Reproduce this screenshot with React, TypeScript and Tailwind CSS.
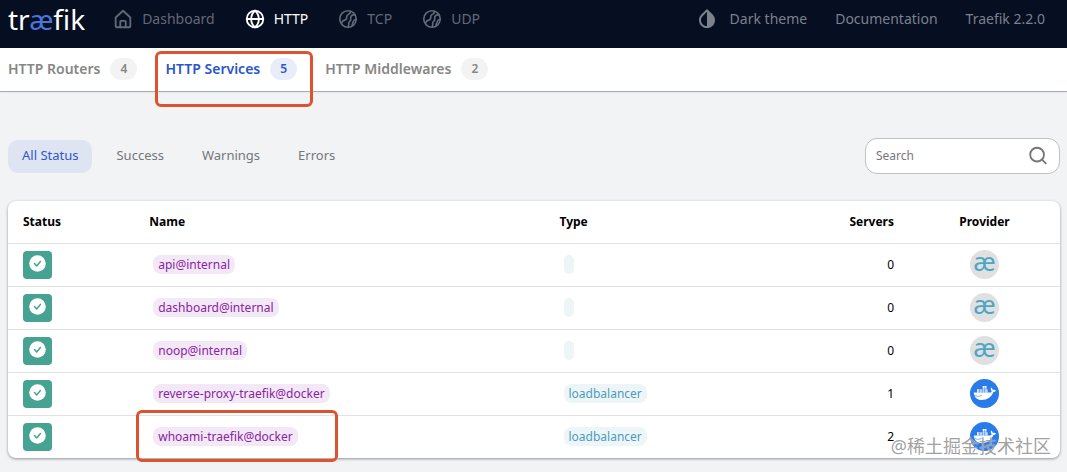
import type { ReactNode } from "react";
import { MdInvertColors } from "react-icons/md";

const iconProps = {
  viewBox: "0 0 24 24",
  fill: "none",
  stroke: "currentColor",
  strokeWidth: 2,
  strokeLinecap: "round" as const,
  strokeLinejoin: "round" as const,
};

const HomeIcon = () => (
  <svg {...iconProps} className="size-[22px]">
    <path d="M4 10.400 12 3l8 7.400V20a1 1 0 0 1-1 1H5a1 1 0 0 1-1-1z" />
    <path d="M9 21v-6a1 1 0 0 1 1-1h4a1 1 0 0 1 1 1v6" />
  </svg>
);

const GlobeIcon = () => (
  <svg {...iconProps} className="size-[22px]">
    <circle cx="12" cy="12" r="9" />
    <path d="M3 12h18M12 3c-3 2.600-4.200 5.600-4.200 9s1.200 6.400 4.200 9M12 3c3 2.600 4.200 5.600 4.200 9s-1.200 6.400-4.200 9" />
  </svg>
);

const Globe2Icon = () => (
  <svg {...iconProps} strokeWidth={1.8} className="size-[22px]">
    <circle cx="12" cy="12" r="9" />
    <path d="M14.800 3.600c-.2 1.700-1 2.800-2.300 3.300-1.500.6-2 1.500-1.900 3.100.1 1.800-.7 3-2.300 3.300-1.600.2-2.500.9-3.300 3.200" />
    <path d="M19.500 7.200c-2.200.1-3.700.7-4.300 2.100-.5 1.200-.1 2.300-.3 3.600-.2 1.200-1.400 1.700-1.900 2.900-.5 1.400.1 3-.8 5" />
    <path d="M20.300 12.500c-1.500.3-2.300 1-2.500 2.300-.2 1.500-1.200 2.200-1.300 4.100" />
  </svg>
);

const SearchIcon = () => (
  <svg {...iconProps} className="size-[22px] text-[#777]">
    <circle cx="11" cy="10.500" r="7.500" />
    <path d="m16.500 16 4 4" />
  </svg>
);

const StatusIcon = () => (
  <span className="flex h-7 w-[29px] items-center justify-center rounded bg-[#46a291] pb-0.5">
    <svg viewBox="0 0 17 17" className="size-[17px]" role="img" aria-label="Success">
      <circle cx="8.500" cy="8.500" r="8.300" fill="#fff" />
      <path
        d="m5.500 8.500 2.200 2.400 3.700-4.400"
        fill="none"
        stroke="#46a291"
        strokeWidth="1.500"
        strokeLinecap="round"
        strokeLinejoin="round"
      />
    </svg>
  </span>
);

const DockerIcon = () => (
  <svg viewBox="0 0 29 29" className="mx-auto block size-[29px]">
    <circle cx="14.500" cy="14.500" r="14.500" fill="#2a7bea" />
    <g fill="#fff">
      <path d="M12.500 7h4v3.200h-4zM7 10.200h10.500v3.400H7z" />
      <path d="M3.800 13.600h15.700c1.300 0 2-.7 2.200-1.600-1-1-1.300-2.200-.6-3.500.9.500 1.600 1.300 1.700 2.400 1.200-.4 2.300-.3 3.200.3-.4 1.200-1.300 1.800-2.600 1.900-1.800 4.900-6 8-11.700 8-4.300 0-7.500-2.300-7.900-7.500z" />
    </g>
    <path
      d="M9.600 10.400v3M12.300 7.500v6M14.700 7.500v6M7.500 12h9.500M8 9.900h9M4.500 16.300c2.500 1.500 5.500 1.200 7.500-.2"
      fill="none"
      stroke="#2a7bea"
      strokeWidth=".6"
    />
  </svg>
);

const InternalIcon = () => (
  <span className="mx-auto flex size-[29px] items-center justify-center rounded-full bg-[#e0e0e0] pb-[7px] text-[26px] leading-[26px] text-[#4fa6c4]">
    æ
  </span>
);

// red marker frame around the highlighted item
const Marker = ({ className }: { className: string }) => (
  <span className={`pointer-events-none absolute rounded-md border-3 border-[#dd5330] ${className}`} />
);

const navItems = [
  { label: "Dashboard", icon: <HomeIcon /> },
  { label: "HTTP", icon: <GlobeIcon />, active: true },
  { label: "TCP", icon: <Globe2Icon /> },
  { label: "UDP", icon: <Globe2Icon /> },
];

const tabs = [
  { label: "HTTP Routers", count: 4 },
  { label: "HTTP Services", count: 5, active: true },
  { label: "HTTP Middlewares", count: 2 },
];

const filters = ["All Status", "Success", "Warnings", "Errors"];

const services = [
  { name: "api@internal", type: "", servers: 0, provider: "internal" },
  { name: "dashboard@internal", type: "", servers: 0, provider: "internal" },
  { name: "noop@internal", type: "", servers: 0, provider: "internal" },
  { name: "reverse-proxy-traefik@docker", type: "loadbalancer", servers: 1, provider: "docker" },
  { name: "whoami-traefik@docker", type: "loadbalancer", servers: 2, provider: "docker", marked: true },
];

const Chip = ({ className, children }: { className: string; children?: ReactNode }) => (
  <span className={`ml-1 inline-block h-[19px] rounded-lg px-[5px] align-middle leading-[19px] ${className}`}>
    {children}
  </span>
);

const Header = () => (
  <header className="flex h-12 items-center bg-[#060e21] pr-[22px] pb-2.5 pl-2 text-sm text-[#7b818d]">
    <a href="#" className="text-[28px] leading-9 text-white">
      tr<span className="text-[#4a76dc]">æ</span>fik
    </a>
    <nav className="ml-[27px] flex items-center gap-[29px]">
      {navItems.map((item) => (
        <a
          key={item.label}
          href="#"
          className={`flex items-center gap-2 ${item.active ? "text-white" : "text-[#626977]"}`}
        >
          {item.icon}
          {item.label}
        </a>
      ))}
    </nav>
    <div className="ml-auto flex items-center gap-7">
      <button className="flex items-center gap-[11px]">
        <MdInvertColors className="size-6" />
        Dark theme
      </button>
      <a href="#">Documentation</a>
      <a href="#">Traefik 2.2.0</a>
    </div>
  </header>
);

const Tabs = () => (
  <nav className="flex h-11 gap-7 border-b border-[#a9abad] bg-white pl-2 text-sm font-semibold shadow-xs">
    {tabs.map((tab) => (
      <a
        key={tab.label}
        href="#"
        className={`relative flex items-center gap-2.5 pb-px ${tab.active ? "text-[#2a55cb]" : "text-[#868686]"}`}
      >
        {tab.label}
        <span
          className={`flex h-[22px] w-[27px] items-center justify-center rounded-full text-xs ${
            tab.active ? "bg-[#e9edf9]" : "bg-[#f3f3f3]"
          }`}
        >
          {tab.count}
        </span>
        {tab.active && <Marker className="top-[3px] -right-4 -bottom-4 -left-2.5 z-10" />}
      </a>
    ))}
  </nav>
);

const ServicesTable = () => (
  <table className="w-full table-fixed rounded-lg bg-white text-xs text-black shadow-[0_1px_3px_rgba(0,0,0,0.4)]">
    <thead>
      <tr className="h-[42px] text-left [&>th]:px-[15px] [&>th]:font-bold">
        <th className="w-[12%]">Status</th>
        <th className="w-[39%]">Name</th>
        <th>Type</th>
        <th className="w-[12%] text-right">Servers</th>
        <th className="w-[151px] text-center">Provider</th>
      </tr>
    </thead>
    <tbody>
      {services.map((service) => (
        <tr key={service.name} className="h-[43px] border-t border-[#e2e2e2] [&>td]:px-[15px]">
          <td>
            <StatusIcon />
          </td>
          <td className="relative">
            <Chip className="bg-[#f2e8f6] text-[#8a23a3]">{service.name}</Chip>
            {service.marked && <Marker className="-top-1.5 -bottom-1 left-0.5 w-[202px]" />}
          </td>
          <td>
            <Chip className="bg-[#edf5f7] text-[#4b9dc0]">{service.type}</Chip>
          </td>
          <td className="text-right">{service.servers}</td>
          <td>{service.provider === "docker" ? <DockerIcon /> : <InternalIcon />}</td>
        </tr>
      ))}
    </tbody>
  </table>
);

const App = () => {
  return (
    <div className="relative min-h-screen bg-[#f1f3f5] font-['Noto_Sans','Noto_Sans_CJK_SC',sans-serif]">
      <Header />
      <Tabs />
      <main className="pt-[46px] pr-[7px] pb-3 pl-2">
        <div className="mb-[27px] flex items-center justify-between">
          <div className="flex gap-2.5">
            {filters.map((filter, i) => (
              <button
                key={filter}
                className={`h-[33px] rounded-[10px] px-3.5 text-[13px] ${
                  i === 0 ? "bg-[#dfe4f2] text-[#2f58cb]" : "text-[#757779]"
                }`}
              >
                {filter}
              </button>
            ))}
          </div>
          <label className="flex h-9 w-[195px] items-center rounded-xl border border-[#c0c1c3] bg-white px-2.5">
            <input
              type="text"
              aria-label="Search"
              placeholder="Search"
              className="min-w-0 flex-1 text-xs outline-none placeholder:text-[#777]"
            />
            <SearchIcon />
          </label>
        </div>
        <ServicesTable />
      </main>
      <p className="pointer-events-none absolute right-4 bottom-3 text-lg leading-7 text-[#777]/70 [text-shadow:0_0_1px_#fff]">
        @稀土掘金技术社区
      </p>
    </div>
  );
};

export default App;
